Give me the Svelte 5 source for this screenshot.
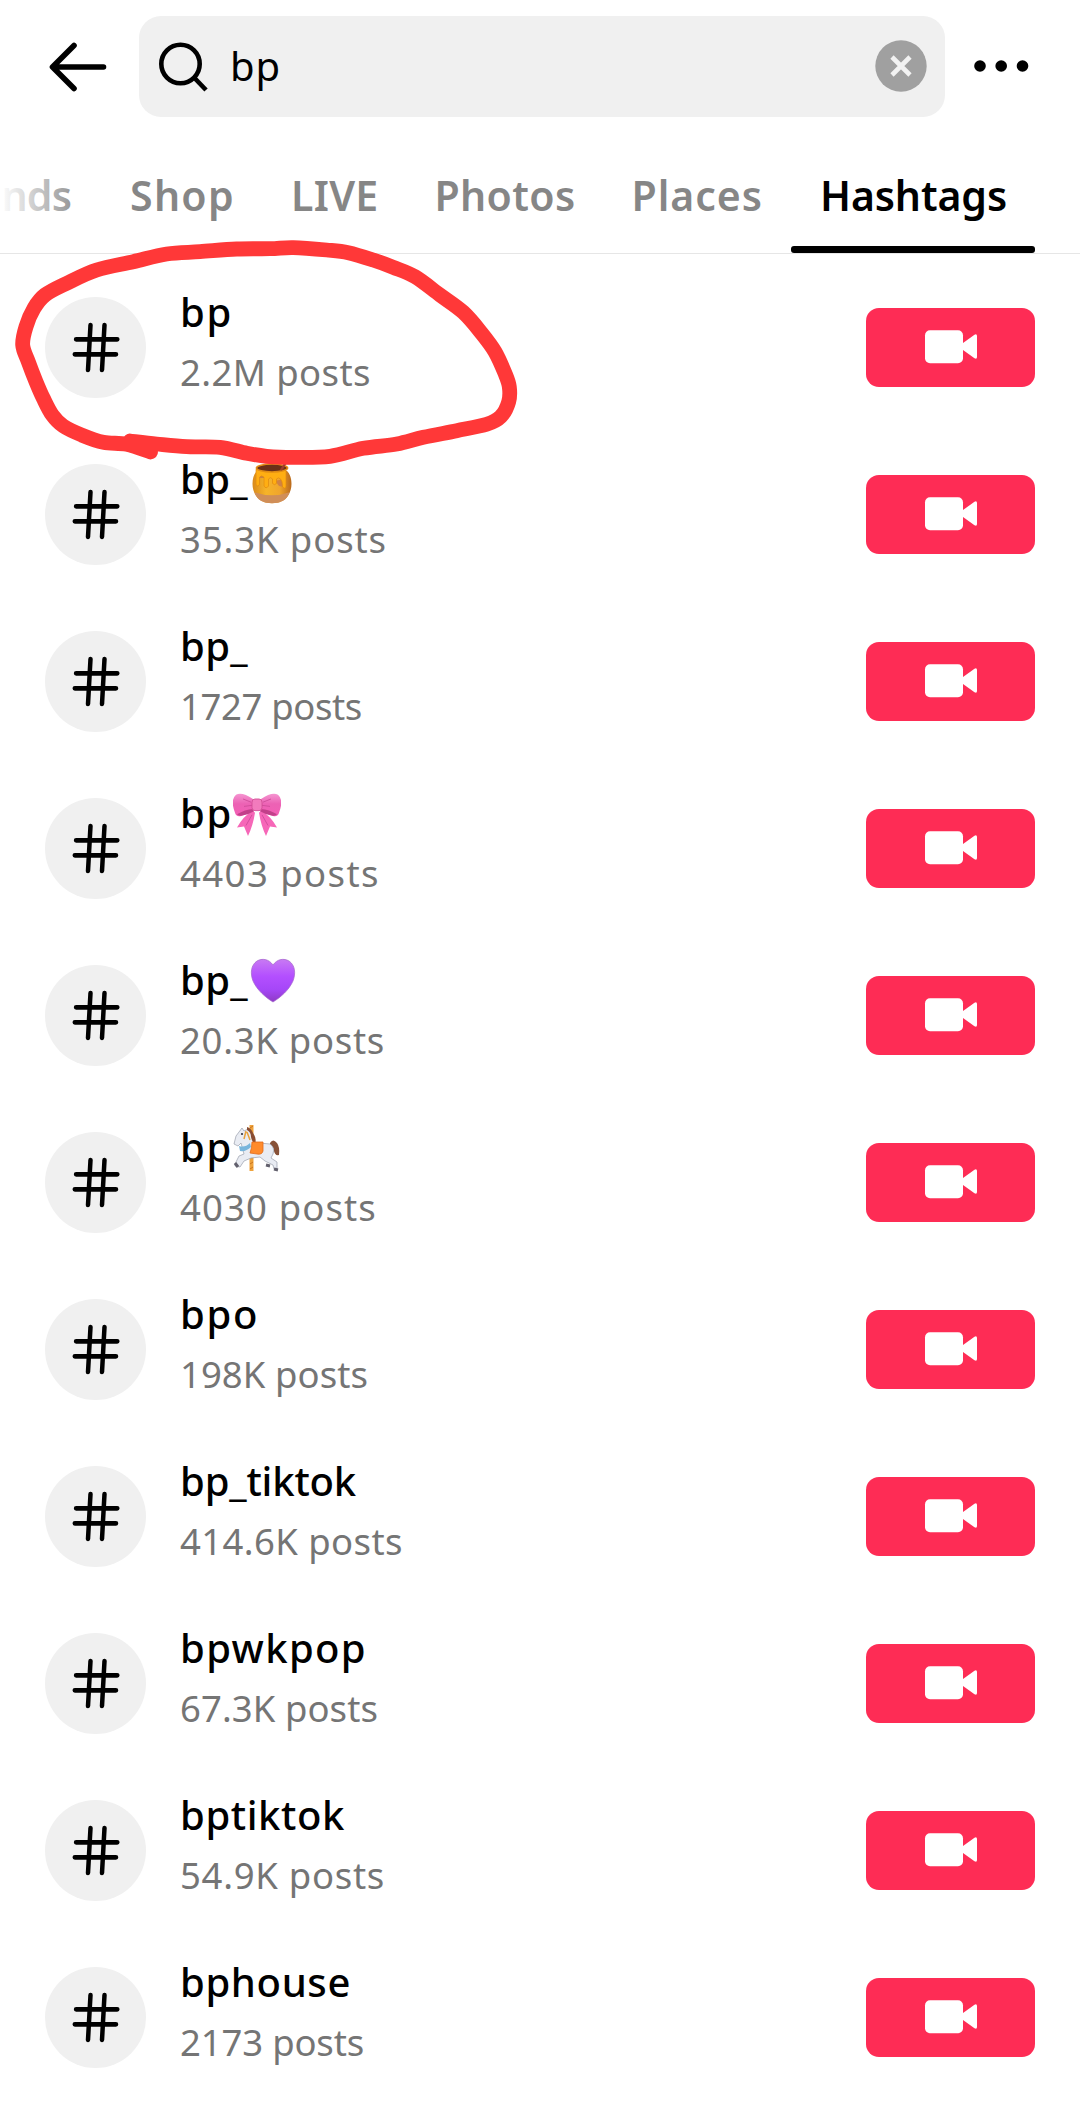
<script lang="ts">
  type Emoji = 'honey' | 'bow' | 'heart' | 'horse';
  type Point = [number, number];

  interface Hashtag {
    name: string;
    nameWidth: number;
    posts: string;
    postsWidth: number;
    emoji?: Emoji;
  }

  const tabs = [
    { label: 'nds', width: 69.5 },
    { label: 'Shop', width: 105 },
    { label: 'LIVE', width: 87.5 },
    { label: 'Photos', width: 141 },
    { label: 'Places', width: 131.5 },
    { label: 'Hashtags', width: 187 },
  ];

  const hashtags: Hashtag[] = [
    { name: 'bp', nameWidth: 53, posts: '2.2M posts', postsWidth: 191 },
    { name: 'bp_', nameWidth: 68, posts: '35.3K posts', postsWidth: 207, emoji: 'honey' },
    { name: 'bp_', nameWidth: 68, posts: '1727 posts', postsWidth: 182 },
    { name: 'bp', nameWidth: 53, posts: '4403 posts', postsWidth: 200, emoji: 'bow' },
    { name: 'bp_', nameWidth: 68, posts: '20.3K posts', postsWidth: 205, emoji: 'heart' },
    { name: 'bp', nameWidth: 53, posts: '4030 posts', postsWidth: 197, emoji: 'horse' },
    { name: 'bpo', nameWidth: 79, posts: '198K posts', postsWidth: 188 },
    { name: 'bp_tiktok', nameWidth: 176, posts: '414.6K posts', postsWidth: 223 },
    { name: 'bpwkpop', nameWidth: 187, posts: '67.3K posts', postsWidth: 198 },
    { name: 'bptiktok', nameWidth: 165, posts: '54.9K posts', postsWidth: 205 },
    { name: 'bphouse', nameWidth: 171, posts: '2173 posts', postsWidth: 184 },
  ];

  // marker stroke, from the pen-down point round to where it closes
  const loop: Point[] = [
    [150.5, 452], [126.7, 444.3], [103.3, 442.3], [81.7, 435], [63.3, 426], [52.3, 415],
    [43.3, 398.3], [36, 381.7], [28.3, 361.7], [22.7, 345], [26, 326.7], [34, 308.3],
    [45, 295], [66.7, 283.3], [96.7, 270], [133.3, 261.7], [166.7, 254], [200, 251.7],
    [236.7, 249], [270, 248.7], [293.3, 247.6], [326.7, 250], [348.3, 252.7], [373.3, 260],
    [393.3, 267.3], [415, 276.7], [440, 295], [463.3, 312.3], [481.7, 333.3], [495, 351.7],
    [505, 373.3], [509.3, 386.7], [508.7, 401.7], [500.7, 416.7], [486.7, 424.3],
    [456.7, 430.7], [423.3, 437.3], [396.7, 444], [363.3, 448.3], [330, 456.3],
    [293.3, 457.3], [266.7, 456.3], [246.7, 453.3], [220, 447.3], [186.7, 446.7],
    [156.7, 444], [130, 441],
  ];

  let query = $state('bp');
  let active = $state('Hashtags');

  /** Catmull-Rom spline through the points, as cubic segments */
  function smooth(points: Point[]): string {
    let d = `M${points[0]}`;
    for (let i = 0; i < points.length - 1; i++) {
      const a = points[i - 1] ?? points[i];
      const b = points[i];
      const c = points[i + 1];
      const e = points[i + 2] ?? c;
      d += `C${b[0] + (c[0] - a[0]) / 6} ${b[1] + (c[1] - a[1]) / 6}`;
      d += ` ${c[0] - (e[0] - b[0]) / 6} ${c[1] - (e[1] - b[1]) / 6} ${c[0]} ${c[1]}`;
    }
    return d;
  }

  /** Tracks the text out or in until it takes the given width */
  function fit(node: HTMLElement, width: number) {
    const natural = node.getBoundingClientRect().width;
    const count = node.textContent?.length || 1;
    node.style.letterSpacing = `${(width - natural) / count}px`;
  }
</script>

{#snippet emojiIcon(kind: Emoji)}
  <svg class="emoji" viewBox="0 0 48 48" aria-hidden="true">
    {#if kind === 'honey'}
      <defs>
        <linearGradient id="pot" x1="0" y1="0" x2="1" y2="0">
          <stop offset="0" stop-color="#d98a1c" />
          <stop offset="0.35" stop-color="#f6b429" />
          <stop offset="0.7" stop-color="#f0a52c" />
          <stop offset="1" stop-color="#b9691c" />
        </linearGradient>
      </defs>
      <g transform="translate(0 8) scale(1 .88)">
        <path d="M9 8C4 13 2.500 27 8 36c3 5.500 9 8.500 16 8.500s13-3 16-8.500c5.500-9 4-23-1-28z" fill="url(#pot)" />
        <path d="M6.500 32Q24 39 41.500 32C39 41 33 44.500 24 44.500S9 41 6.500 32z" fill="#d08e58" />
        <path d="M10 9h8v7h-7z" fill="#c98242" />
        <path d="M27 19l6-1 3 8-5-1z" fill="#cf8245" />
        <path d="M8 6v17q1.500 4 3.500 0v-8q2-3 4.500 0v10q2 4 4.500 0V17q2-3 4 0v5q2 3 4 0v-5q2-2.500 4 0q2 2 2 9q2 3 3.500 0V6z" fill="#ffae12" stroke="#df870d" stroke-width=".7" />
        <ellipse cx="24" cy="4.500" rx="15.500" ry="4.500" fill="#6b3018" stroke="#e18c14" stroke-width="1.800" />
        <path d="M33 7l5-9" stroke="#9c3f2b" stroke-width="2.500" />
      </g>
    {:else if kind === 'bow'}
      <defs>
        <linearGradient id="ribbon" x1="0" y1="0" x2="0" y2="1">
          <stop offset="0" stop-color="#f595d1" />
          <stop offset="0.45" stop-color="#ec62b4" />
          <stop offset="1" stop-color="#f45eb5" />
        </linearGradient>
      </defs>
      <g transform="translate(0 .500) scale(1 1.060)">
        <path d="M20 19Q10 24 4 35l7-1 4 9q5-10 7-22zM28 19q10 5 16 16l-7-1-4 9q-5-10-7-22z" fill="#f667b8" />
        <path d="M20 8Q9 1 3 4q-6 5-1 17q1 4 6 3q7-1 13-6zM28 8Q39 1 45 4q6 5 1 17q-1 4-6 3q-7-1-13-6z" fill="url(#ribbon)" />
        <path d="M20 17.500Q12 18 4 22.500q2 2 5 1q7-1 12-4zM28 17.500q8 .5 16 5q-2 2-5 1q-7-1-12-4z" fill="#c2408a" />
        <path d="M18 11L10 8m9 6l-8 1m19-4l8-3m-9 6l8 1M19 23l-6 10m16-10l6 10" fill="none" stroke="#cf4d9b" stroke-width=".9" />
        <rect x="19" y="8" width="10" height="11" rx="3" fill="#f27bbd" stroke="#d04a93" stroke-width=".8" />
      </g>
    {:else if kind === 'heart'}
      <defs>
        <linearGradient id="love" x1="0" y1="0" x2="0" y2="1">
          <stop offset="0" stop-color="#c879f3" />
          <stop offset="0.4" stop-color="#b34fff" />
          <stop offset="0.7" stop-color="#a647f8" />
          <stop offset="1" stop-color="#8e3ac5" />
        </linearGradient>
      </defs>
      <path d="M25 8C21 2 14 1 9 4c-6 4-7 12-4 20c4 9 12 16 20 21c8-5 16-12 20-21c3-8 2-16-4-20c-5-3-12-2-16 4z" fill="url(#love)" stroke="#a365cb" stroke-width=".7" />
    {:else}
      <path d="M18.500 1v46" stroke="#efa33c" stroke-width="4" />
      <path d="M17 4l3-2m-3 9l3-2m-3 31l3-2m-3 7l3-2" stroke="#c87320" stroke-width="1" />
      <path d="M37 19q3-5 7 0q3 4 2 12q-4 1-5-4q0-4-4-5z" fill="#875137" />
      <path d="M9 4l2 3l4-2q5 3 5 10q2 5 6 4l11 1q5 3 3 10l-2 4l6 4v7h-3l-1-4l-8-4l-5-4l-9 1l-7 3l-4 6l-5-1l1-4l3-6l5-2l-3-11l-3 3l-4-2l2-8l3-4z" fill="#e9ecf3" stroke="#9a9fac" stroke-width=".7" />
      <path d="M14 3q4 1 6 6q4 5 2 11q-3-2-4-7q0-5-4-7z" fill="#8a4d32" />
      <path d="M6 22q6 2 11-3l1 4q-5 5-11 4z" fill="#78b5dc" />
      <path d="M13 7l-2 8M14 8l3 8" fill="none" stroke="#e9a23b" stroke-width="1.500" />
      <circle cx="9" cy="10" r="1.100" fill="#313440" />
      <path d="M19 18h11v9q-1 4-6 3l-7-1q2-5 2-11z" fill="#ff8b2c" stroke="#e16a19" stroke-width=".8" />
      <path d="M2 39l3 4M33 41l4 1m4 3l4 1" stroke="#62606d" stroke-width="3" />
    {/if}
  </svg>
{/snippet}

<main class="screen">
  <header class="topbar">
    <button class="back" aria-label="Back">
      <svg width="58" height="52" viewBox="0 0 58 52">
        <path d="M54.500 26H4.500M25 4.500L3.500 26l21.500 21.500" />
      </svg>
    </button>
    <label class="search">
      <svg class="glass" width="54" height="54" viewBox="0 0 54 54">
        <circle cx="24.500" cy="24" r="19.200" />
        <path d="M38.500 38L50 50" />
      </svg>
      <input aria-label="Search" bind:value={query} />
      <button class="clear" aria-label="Clear" onclick={() => (query = '')}>
        <svg width="52" height="52" viewBox="0 0 52 52">
          <circle cx="26" cy="26" r="25.700" />
          <path d="M17 17l18 18M35 17L17 35" />
        </svg>
      </button>
    </label>
    <button class="more" aria-label="More">
      <svg width="56" height="14" viewBox="0 0 56 14">
        <circle cx="7" cy="7" r="5.800" />
        <circle cx="28.200" cy="7" r="5.800" />
        <circle cx="49.500" cy="7" r="5.800" />
      </svg>
    </button>
  </header>

  <nav class="tabs">
    {#each tabs as tab}
      <button class="tab" class:active={active === tab.label} onclick={() => (active = tab.label)}>
        <span use:fit={tab.width}>{tab.label}</span>
      </button>
    {/each}
  </nav>

  <ul class="list">
    {#each hashtags as tag}
      <li class="row">
        <span class="avatar">
          <svg width="101" height="101" viewBox="0 0 101 101">
            <path d="M31.200 42.300H72.200M29.900 57.300H70.900" stroke-width="4.800" />
            <path d="M45.500 28L43 73M59.500 28L57 73" stroke-width="4.500" />
          </svg>
        </span>
        <div class="info">
          <div class="name">
            <span use:fit={tag.nameWidth}>{tag.name}</span>
            {#if tag.emoji}
              {@render emojiIcon(tag.emoji)}
            {/if}
          </div>
          <div class="posts"><span use:fit={tag.postsWidth}>{tag.posts}</span></div>
        </div>
        <button class="record" aria-label="Record video">
          <svg width="54" height="36" viewBox="0 0 54 36">
            <rect x="1" y="1.300" width="38" height="33" rx="5" />
            <path d="M39 14L50.500 5.700Q53 4.500 53 7V28Q53 30.500 50.500 29.300L39 21z" />
          </svg>
        </button>
      </li>
    {/each}
  </ul>

  <svg class="marker" width="540" height="240" viewBox="0 230 540 240" aria-hidden="true">
    <path d={smooth(loop)} />
  </svg>
</main>

<style>
  :global(body) {
    margin: 0;
    background: #fff;
  }
  .screen {
    position: relative;
    width: 1080px;
    height: 2114px;
    overflow: hidden;
    background: #fff;
    color: #000;
    font-family: 'Noto Sans', 'Open Sans', sans-serif;
  }
  button {
    padding: 0;
    border: 0;
    background: none;
    color: inherit;
    font: inherit;
    cursor: pointer;
  }
  svg {
    display: block;
    flex: none;
  }
  .topbar {
    display: flex;
    align-items: center;
    box-sizing: border-box;
    height: 117px;
    padding: 16px 51px 0 49px;
  }
  .back {
    width: 90px;
  }
  .back path {
    fill: none;
    stroke: #000;
    stroke-width: 5.600;
    stroke-linecap: round;
    stroke-linejoin: round;
  }
  .search {
    display: flex;
    align-items: center;
    box-sizing: border-box;
    width: 806px;
    height: 101px;
    padding: 0 18px 0 17px;
    border-radius: 22px;
    background: #f0f0f0;
  }
  .glass {
    fill: none;
    stroke: #000;
    stroke-width: 4.600;
  }
  input {
    flex: 1;
    min-width: 0;
    height: 56px;
    margin: 0 0 2px 20px;
    padding: 0;
    border: 0;
    outline: 0;
    background: none;
    color: #000;
    font: 400 40px 'Noto Sans', sans-serif;
    letter-spacing: 1px;
  }
  .clear {
    margin-bottom: 2px;
  }
  .clear circle {
    fill: #a0a0a0;
  }
  .clear path {
    stroke: #f2f2f2;
    stroke-width: 4.600;
  }
  .more {
    margin: 0 0 1px 27.500px;
  }
  .tabs {
    position: relative;
    display: flex;
    justify-content: flex-end;
    box-sizing: border-box;
    height: 137px;
    padding-right: 45px;
    border-bottom: 1px solid #e6e6e6;
  }
  .tabs::before {
    content: '';
    position: absolute;
    left: 0;
    top: 0;
    z-index: 1;
    width: 84px;
    height: 130px;
    background: linear-gradient(90deg, #fff, rgba(255, 255, 255, 0));
  }
  .tab {
    box-sizing: border-box;
    height: 136px;
    padding: 27px 28px 0;
    border-bottom: 7px solid transparent;
    color: #868686;
    font-size: 41px;
    font-weight: 600;
    line-height: 56px;
    white-space: nowrap;
  }
  .tab:first-child {
    padding-left: 0;
    padding-right: 31px;
  }
  .tab.active {
    position: relative;
    padding-left: 29px;
    color: #000;
  }
  .tab.active::after {
    content: '';
    position: absolute;
    left: 0;
    right: 0;
    bottom: -7px;
    height: 7px;
    border-radius: 3px;
    background: #000;
  }
  .tab span,
  .name span,
  .posts span {
    display: inline-block;
    white-space: pre;
  }
  .list {
    margin: 0;
    padding: 0;
    list-style: none;
  }
  .row {
    display: flex;
    align-items: flex-start;
    box-sizing: border-box;
    height: 167px;
    padding: 34px 45px 0;
  }
  .avatar {
    width: 101px;
    height: 101px;
    margin-top: 9px;
    border-radius: 50%;
    background: #f0f0f0;
  }
  .avatar path {
    fill: none;
    stroke: #000;
    stroke-linecap: round;
  }
  .info {
    flex: 1;
    padding-left: 34px;
  }
  .name {
    display: flex;
    height: 48px;
    font-size: 40px;
    font-weight: 500;
    line-height: 48px;
  }
  .emoji {
    width: 48px;
    height: 48px;
    padding-top: 1px;
  }
  .posts {
    margin-top: 12px;
    color: #757575;
    font-size: 36.500px;
    line-height: 48px;
  }
  .record {
    display: grid;
    place-items: center;
    width: 169px;
    height: 79px;
    margin-top: 19.500px;
    border-radius: 13px;
    background: #fe2c55;
  }
  .record svg {
    fill: #fff;
  }
  .marker {
    position: absolute;
    left: 0;
    top: 230px;
    pointer-events: none;
  }
  .marker path {
    fill: none;
    stroke: #ff3838;
    stroke-width: 14.800;
    stroke-linecap: round;
    stroke-linejoin: round;
  }
</style>
